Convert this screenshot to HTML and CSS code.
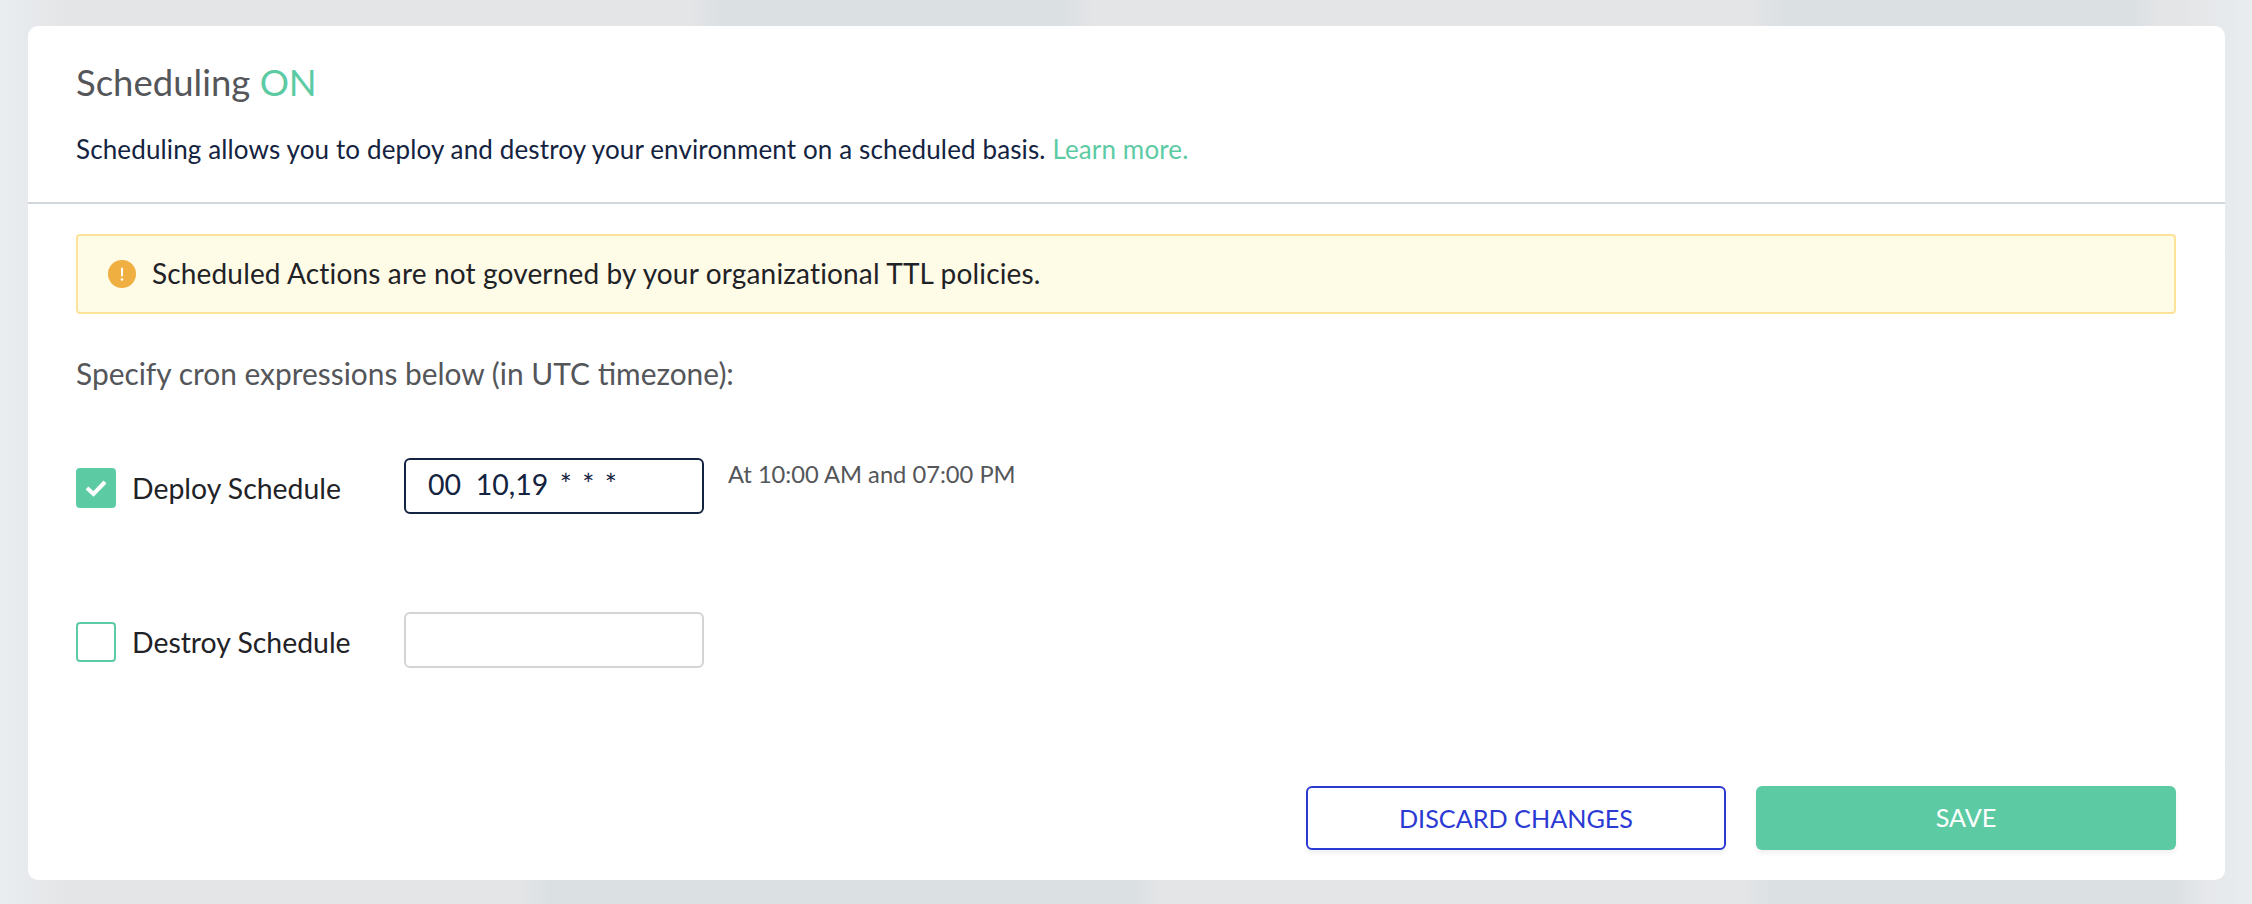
FILE: index.html
```html
<!DOCTYPE html>
<html lang="en">
<head>
<meta charset="utf-8">
<title>Scheduling</title>
<link rel="stylesheet" href="styles.css">
</head>
<body>
<main class="card">
  <header class="card-head">
    <h1 class="title">Scheduling <span class="on">ON</span></h1>
    <p class="desc">Scheduling allows you to deploy and destroy your environment on a scheduled basis. <a class="link" href="#">Learn more.</a></p>
  </header>
  <section class="card-body">
    <div class="alert">
      <svg class="alert-icon" width="28" height="28" viewBox="0 0 28 28"><circle cx="14" cy="14" r="14" fill="#f0af41"/><rect x="13" y="7.5" width="2" height="9" rx="1" fill="#fff"/><circle cx="14" cy="19.5" r="1.3" fill="#fff"/></svg>
      <span class="alert-text">Scheduled Actions are not governed by your organizational TTL policies.</span>
    </div>
    <p class="hint-line">Specify cron expressions below (in UTC timezone):</p>
    <div class="row row-deploy">
      <label class="check-label">
        <span class="box box-on"><svg width="24" height="20" viewBox="0 0 24 20"><path d="M3 10 L9.5 16 L21 4" fill="none" stroke="#fff" stroke-width="4"/></svg></span>
        Deploy Schedule
      </label>
      <div class="field field-active">00&nbsp; 10,19&nbsp; <span class="stars">* * *</span></div>
      <span class="cron-text">At 10:00 AM and 07:00 PM</span>
    </div>
    <div class="row row-destroy">
      <label class="check-label">
        <span class="box"></span>
        Destroy Schedule
      </label>
      <div class="field"></div>
    </div>
    <div class="actions">
      <button class="btn btn-outline">DISCARD CHANGES</button>
      <button class="btn btn-solid">SAVE</button>
    </div>
  </section>
</main>
</body>
</html>
```
FILE: styles.css
```css
* { box-sizing: border-box; }
html, body { margin: 0; height: 100%; }
body {
  width: 2252px;
  height: 904px;
  overflow: hidden;
  padding: 26px 27px 24px 28px;
  font-family: Lato, "Open Sans", sans-serif;
  background-color: #e4e5e7;
  background-image:
    linear-gradient(90deg, #e9edf0 0, rgba(233,237,240,0) 70px),
    linear-gradient(270deg, #e9edf0 0, rgba(233,237,240,0) 70px),
    linear-gradient(90deg, rgba(219,224,227,0) 690px, #dbe0e3 720px, #dbe0e3 1060px, rgba(219,224,227,0) 1095px),
    linear-gradient(90deg, rgba(219,224,227,0) 1750px, #dbe0e3 1785px, #dbe0e3 2130px, rgba(219,224,227,0) 2160px),
    linear-gradient(90deg, rgba(219,224,227,0) 520px, #dbe0e3 550px, #dbe0e3 1130px, rgba(219,224,227,0) 1165px),
    linear-gradient(90deg, rgba(219,224,227,0) 1740px, #dbe0e3 1775px, #dbe0e3 2170px, rgba(219,224,227,0) 2205px);
  background-size: 100% 100%, 100% 100%, 100% 26px, 100% 26px, 100% 24px, 100% 24px;
  background-position: 0 0, 0 0, 0 0, 0 0, 0 100%, 0 100%;
  background-repeat: no-repeat;
}
.card {
  height: 854px;
  background: #fff;
  border-radius: 10px;
  display: flex;
  flex-direction: column;
}
.card-head {
  height: 178px;
  padding: 0 49px 0 48px;
  border-bottom: 2px solid #cfd6dc;
}
.title {
  margin: 0;
  padding-top: 36px;
  font-size: 36.5px;
  line-height: 40px;
  font-weight: 400;
  color: #54565a;
}
.on { color: #5ccba4; }
.desc {
  margin: 32px 0 0;
  font-size: 26px;
  letter-spacing: 0.13px;
  line-height: 30px;
  color: #14233f;
}
.link { color: #5ccba4; text-decoration: none; }
.card-body {
  flex: 1;
  padding: 30px 49px 30px 48px;
  display: flex;
  flex-direction: column;
}
.alert {
  height: 80px;
  flex: none;
  display: flex;
  align-items: center;
  gap: 16px;
  padding-left: 30px;
  background: #fefbe6;
  border: 2px solid #fde39a;
  border-radius: 4px;
  font-size: 28px;
  letter-spacing: 0.16px;
  color: #1f2226;
}
.alert-text { margin-bottom: 3px; }
.hint-line {
  margin: 44px 0 0;
  font-size: 29.9px;
  line-height: 30px;
  color: #54565a;
}
.row { display: flex; align-items: flex-start; }
.row-deploy { margin-top: 70px; height: 56px; }
.row-destroy { margin-top: 98px; height: 56px; }
.check-label {
  display: flex;
  align-items: center;
  gap: 16px;
  width: 328px;
  height: 56px;
  font-size: 28.4px;
  color: #1f2226;
  padding-top: 4px;
}
.box {
  width: 40px;
  height: 40px;
  flex: none;
  border-radius: 4px;
  border: 2px solid #5ccba4;
  display: flex;
  align-items: center;
  justify-content: center;
}
.box-on { background: #5ccba4; }
.field {
  width: 300px;
  height: 56px;
  border: 2px solid #d4d4d4;
  border-radius: 6px;
  background: #fff;
  padding-left: 22px;
  font-size: 28.5px;
  line-height: 48px;
  color: #14233f;
}
.field-active { border-color: #14233f; }
.stars { word-spacing: 3px; margin-left: -3px; }
.cron-text {
  margin: 2px 0 0 24px;
  font-size: 23.7px;
  line-height: 28px;
  color: #54565a;
}
.actions {
  margin-top: auto;
  display: flex;
  justify-content: flex-end;
  gap: 30px;
}
.btn {
  width: 420px;
  height: 64px;
  border-radius: 6px;
  font-family: inherit;
  font-size: 25.2px;
  line-height: 60px;
  padding: 0 0 2px;
  box-shadow: 0 4px 4px rgba(0,0,0,0.05);
}
.btn-outline { background: #fff; color: #2c3ad4; border: 2px solid #2c3ad4; }
.btn-solid { background: #5ccba4; color: #fff; border: 0; }
```
